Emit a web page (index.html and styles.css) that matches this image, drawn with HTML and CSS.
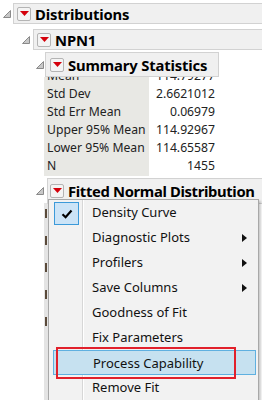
FILE: index.html
```html
<!DOCTYPE html>
<html lang="en">
<head>
    <meta charset="UTF-8">
    <title>Distributions</title>
    <link rel="stylesheet" href="styles.css">
</head>
<body>
    <section id="report">
        <div class="outline lvl0">
            <svg class="disc" width="8" height="8" viewBox="0 0 8 8"><polygon points="7.5,0.5 7.5,7.5 0.5,7.5"/></svg>
            <div class="head wide">
                <span class="rbtn"><svg width="9" height="5" viewBox="0 0 9 5"><polygon points="0,0 9,0 4.5,5"/></svg></span>
                Distributions
            </div>
        </div>
        <div class="outline lvl1">
            <svg class="disc" width="8" height="8" viewBox="0 0 8 8"><polygon points="7.5,0.5 7.5,7.5 0.5,7.5"/></svg>
            <div class="head wide">
                <span class="rbtn"><svg width="9" height="5" viewBox="0 0 9 5"><polygon points="0,0 9,0 4.5,5"/></svg></span>
                NPN1
            </div>
        </div>
        <div class="outline lvl2">
            <svg class="disc" width="8" height="8" viewBox="0 0 8 8"><polygon points="7.5,0.5 7.5,7.5 0.5,7.5"/></svg>
            <div class="head summary">
                <span class="rbtn"><svg width="9" height="5" viewBox="0 0 9 5"><polygon points="0,0 9,0 4.5,5"/></svg></span>
                Summary Statistics
            </div>
        </div>
        <div class="stats">
            <div class="statsinner">
                <div class="srow"><span class="lbl">Mean</span><span class="val">114.79277</span></div>
                <div class="srow"><span class="lbl">Std Dev</span><span class="val">2.6621012</span></div>
                <div class="srow"><span class="lbl">Std Err Mean</span><span class="val">0.06979</span></div>
                <div class="srow"><span class="lbl">Upper 95% Mean</span><span class="val">114.92967</span></div>
                <div class="srow"><span class="lbl">Lower 95% Mean</span><span class="val">114.65587</span></div>
                <div class="srow"><span class="lbl">N</span><span class="val">1455</span></div>
            </div>
        </div>
        <div class="outline lvl3">
            <svg class="disc" width="8" height="8" viewBox="0 0 8 8"><polygon points="7.5,0.5 7.5,7.5 0.5,7.5"/></svg>
            <div class="head fitted">
                <span class="rbtn"><svg width="9" height="5" viewBox="0 0 9 5"><polygon points="0,0 9,0 4.5,5"/></svg></span>
                Fitted Normal Distribution
            </div>
        </div>
        <div class="beneath">
            <i></i><i></i><i></i><i></i><i></i>
        </div>
    </section>

    <ul class="popup">
        <li class="checked">
            <span class="check"><svg width="12" height="10" viewBox="0 0 12 10"><path d="M1.5 5.2 L4.6 8.2 L10.5 1.6" fill="none" stroke="#000" stroke-width="2.2"/></svg></span>
            Density Curve
        </li>
        <li class="sub">Diagnostic Plots</li>
        <li class="sub">Profilers</li>
        <li class="sub">Save Columns</li>
        <li>Goodness of Fit</li>
        <li>Fix Parameters</li>
        <li class="hover">Process Capability</li>
        <li>Remove Fit</li>
    </ul>
    <div class="callout"></div>
</body>
</html>
```
FILE: styles.css
```css
*{
    padding:0;
    margin:0;
    box-sizing:border-box;
}
body{
    background:#fff;
    font-family:"Noto Sans","Open Sans",sans-serif;
    font-size:12px;
    color:#000;
    width:262px;
    height:400px;
    overflow:hidden;
    position:relative;
}
#report{
    padding-top:3px;
}
.outline{
    display:flex;
    align-items:center;
}
.disc{
    flex:none;
    fill:#c8c8c8;
    stroke:#8a8a8a;
    stroke-width:1;
}
.head{
    display:flex;
    align-items:center;
    background:#f0f0f0;
    border:1px solid #d2d2d2;
    font-weight:bold;
    font-size:14.8px;
    letter-spacing:-0.15px;
    white-space:nowrap;
    overflow:hidden;
}
.rbtn{
    flex:none;
    width:14px;
    height:14px;
    margin-right:4px;
    background:#f4f4f4;
    border:1px solid #b4b4b4;
    border-radius:2px;
    display:flex;
    align-items:center;
    justify-content:center;
}
.rbtn svg{
    fill:#d4000b;
}
.lvl0{
    height:21px;
    padding-left:3px;
}
.lvl0 .disc{
    margin-right:2px;
}
.lvl0 .head{
    height:21px;
    flex:1;
    padding-left:3px;
    margin-right:-2px;
}
.lvl1{
    height:21px;
    margin-top:5px;
    padding-left:22px;
}
.lvl1 .disc{
    margin-right:3px;
}
.lvl1 .head{
    height:21px;
    flex:1;
    padding-left:3px;
    margin-right:-2px;
}
.lvl2{
    height:25px;
    margin-top:2px;
    padding-left:36px;
}
.lvl2 .disc{
    margin-right:1px;
}
.lvl2 .head{
    height:25px;
    width:174px;
    padding-left:4px;
}
.stats{
    margin-left:44px;
    width:171px;
    height:99px;
    overflow:hidden;
    background:linear-gradient(to right,#e8e8e4 105px,#fff 105px);
}
.statsinner{
    margin-top:-11px;
}
.srow{
    display:flex;
    height:18px;
    align-items:center;
    font-size:12.2px;
}
.lbl{
    width:105px;
    padding-left:3px;
    white-space:nowrap;
    color:#222;
}
.val{
    flex:1;
    text-align:right;
    color:#222;
}
.lvl3{
    height:25px;
    margin-top:2px;
    padding-left:36px;
}
.lvl3 .disc{
    margin-right:3px;
}
.lvl3 .head{
    height:26px;
    flex:1;
    padding-left:2px;
    margin-right:-4px;
    letter-spacing:-0.35px;
}
.beneath{
    margin-left:44px;
    width:4px;
    height:200px;
    background:#e4e4e4;
    display:flex;
    flex-direction:column;
}
.beneath i{
    display:block;
    width:2px;
    height:9px;
    margin:6px 0 12px 1px;
    background:#5a4a3a;
}

/* popup menu over the report */
.popup{
    position:absolute;
    left:48px;
    top:199px;
    width:211px;
    height:220px;
    list-style:none;
    background:#f2f2f2;
    border:1px solid #a8a8a8;
    font-family:"Noto Sans","Open Sans",sans-serif;
    font-size:13px;
    box-shadow:2px 2px 2px rgba(0,0,0,0.2);
}
.popup::before{
    content:"";
    position:absolute;
    left:33px;
    top:0;
    bottom:0;
    width:1px;
    background:#d7d7d7;
    border-right:1px solid #fff;
}
.popup li{
    position:relative;
    height:25px;
    line-height:25px;
    padding-left:43px;
    color:#111;
    white-space:nowrap;
}
.check{
    position:absolute;
    left:5px;
    top:2px;
    width:25px;
    height:23px;
    background:#cce4f7;
    border:1px solid #3c9ad9;
    display:flex;
    align-items:center;
    justify-content:center;
}
.sub::after{
    content:"";
    position:absolute;
    right:11px;
    top:9px;
    border-left:5px solid #111;
    border-top:4px solid transparent;
    border-bottom:4px solid transparent;
}
.popup li.hover{
    margin:0 2px 0 4px;
    padding-left:39px;
    background:#c6e1f0;
    border:1px solid #5fb0e0;
}
.callout{
    position:absolute;
    left:56px;
    top:347px;
    width:180px;
    height:32px;
    border:2px solid #e1202b;
}
```
